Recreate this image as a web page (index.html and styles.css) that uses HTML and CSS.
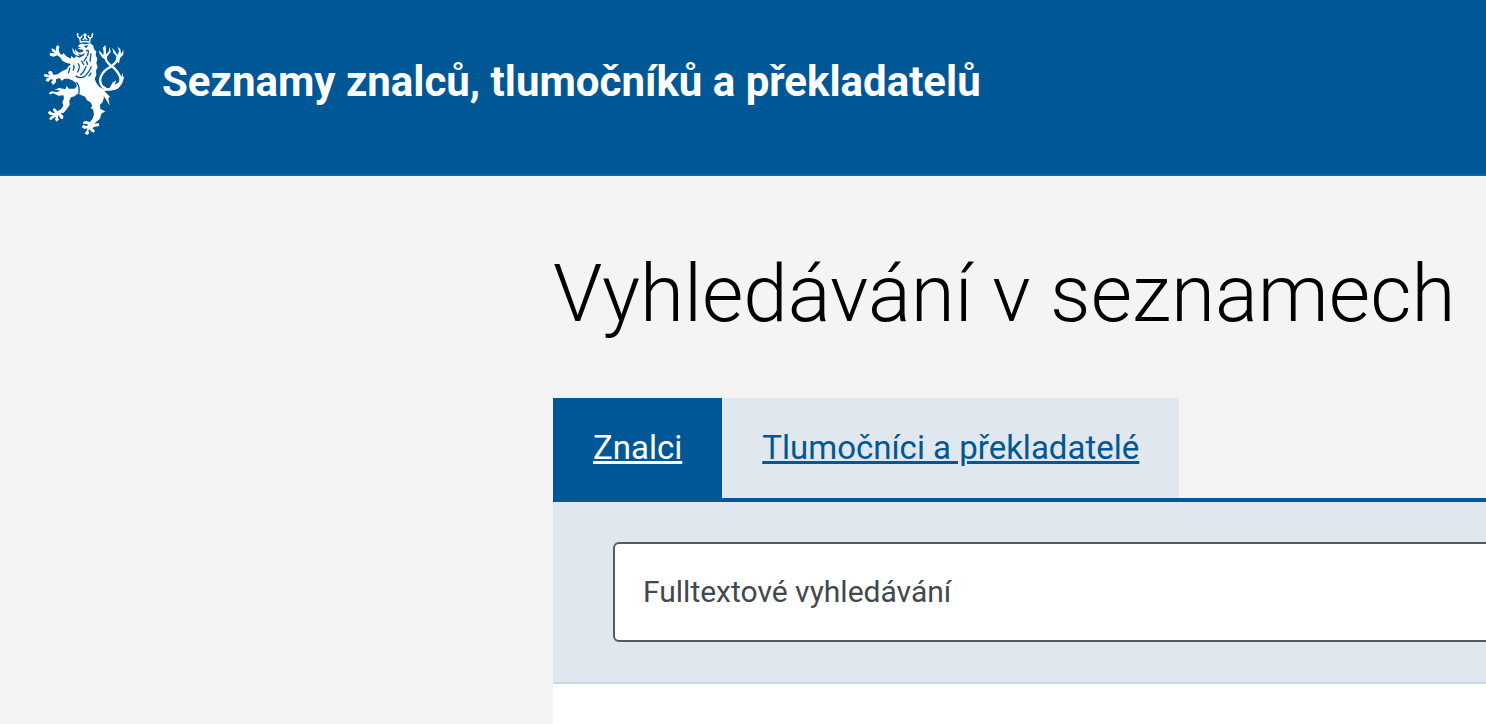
FILE: index.html
```html
<!DOCTYPE html>
<html lang="cs">
<head>
  <meta charset="UTF-8" />
  <meta name="viewport" content="width=device-width, initial-scale=1.0" />
  <title>Seznamy znalců, tlumočníků a překladatelů</title>
  <link rel="stylesheet" href="styles.css">
</head>
<body>
  <!-- Header -->
  <header class="header">
    <svg class="logo" viewBox="0 0 288 348" aria-hidden="true">
      <!-- Crown -->
      <path class="logo-crown" d="M131 49 Q147 44 163 49 M133 46 L131 36 Q124 34 125 25 M161 46 L163 36 Q170 34 169 25 M131 36 Q137 36 138 28 M163 36 Q157 36 156 28 M140 42 Q147 38 147 30 Q147 38 154 42" />
      <path d="M141 27 L147 21 L153 27 L147 34 Z M121 27 L124 20 L130 25 Z M165 25 L170 20 L173 27 Z" />
      <!-- Head, mane, body and right hind leg -->
      <path d="M125 61 L131 55 L139 53 L150 55 L163 52 L172 59 L174 69 L181 77 L179 87 L184 99 L181 111 L185 123 L180 134 L181 147 L176 158 L181 171 L190 183 L207 191 L199 195 L204 214 L200 228 L192 237 L193 249 L208 256 L196 263 L192 278 L181 287 L175 294 L188 291 L190 300 L177 302 L169 306 L177 314 L173 320 L164 315 L161 309 L157 314 L160 322 L153 327 L146 322 L153 313 L154 307 L145 309 L137 303 L142 297 L151 300 L157 297 L151 293 L142 294 L141 288 L150 285 L161 288 L169 280 L174 265 L171 250 L163 246 L169 240 L163 229 L153 223 L147 212 L135 207 L123 204 L116 211 L105 214 L100 224 L101 237 L91 251 L83 260 L74 262 L82 270 L81 279 L74 278 L67 267 L66 276 L69 281 L61 287 L57 280 L60 272 L51 277 L46 282 L39 279 L44 272 L52 268 L42 267 L35 260 L41 254 L49 260 L57 261 L51 253 L52 247 L58 248 L64 256 L75 250 L82 239 L79 229 L84 217 L82 208 L67 209 L56 203 L50 202 L45 205 L38 203 L45 196 L61 198 L73 196 L64 191 L54 191 L70 186 L88 190 L92 180 L98 188 L116 188 L123 180 L119 170 L109 163 L97 158 L85 158 L78 164 L70 156 L60 160 L60 169 L51 177 L45 168 L52 161 L44 160 L37 167 L29 165 L31 158 L41 153 L31 154 L23 150 L26 143 L35 146 L43 149 L36 141 L40 134 L47 136 L53 147 L65 145 L79 135 L93 129 L96 122 L105 114 L92 111 L79 104 L72 94 L64 88 L53 92 L42 89 L41 82 L49 81 L57 83 L48 75 L46 68 L53 68 L61 76 L59 66 L64 57 L71 62 L68 70 L71 82 L78 87 L82 81 L91 91 L104 98 L106 90 L114 97 L121 91 L130 95 L144 88 L148 81 L137 86 L124 84 L117 76 L119 68 L122 76 L130 80 L139 78 L143 72 L132 70 L124 66 L136 65 Z" />
      <path d="M110 65 Q107 80 120 88 L132 91 L125 84 L116 78 Z" />
      <!-- Mane strokes and cut-outs -->
      <g class="logo-cut">
        <path d="M150 76 Q158 69 157 79 L154 90 M165 82 L162 107 M153 92 L143 106 M151 105 L155 117 M136 104 L144 117 M126 112 Q135 123 124 139 M113 116 Q116 124 111 134 M151 121 Q145 137 133 148 M166 121 Q161 137 144 153 M102 125 L97 142 M119 149 Q131 160 146 151 M158 151 L166 140" />
        <path d="M145 61 L153 60 L149 65 M121 169 Q133 180 128 207" />
      </g>
      <!-- Double tail -->
      <g class="logo-line">
        <path d="M245 99 Q240 113 218 126 C197 138 184 163 199 181 C215 197 241 191 251 176 C261 158 249 141 235 127 Q211 111 208 94" />
        <path class="logo-thin" d="M191 187 Q210 201 230 180" />
      </g>
      <path d="M213 103 L199 95 L190 82 L190 73 L202 88 L203 76 L200 66 L208 57 L210 69 L210 85 L218 77 L221 63 L224 78 L213 92 Z M239 102 L241 91 L232 80 L229 65 L237 76 L245 87 L249 76 L245 62 L253 69 L255 84 L262 72 L262 86 L252 96 L249 112 Z" />
      <path d="M221 187 L229 170 L241 163 L236 176 L247 170 L254 155 L261 140 L260 154 L265 151 L259 171 L247 187 L234 193 Z M190 194 L202 192 L222 212 L217 217 L221 239 L207 215 Z" />
    </svg>
    <span class="site-name">Seznamy znalců, tlumočníků a překladatelů</span>
  </header>

  <!-- Main Content -->
  <main class="content">
    <h1>Vyhledávání v seznamech</h1>
    <nav class="tabs">
      <a class="tab active" href="#znalci">Znalci</a>
      <a class="tab" href="#tlumocnici">Tlumočníci a překladatelé</a>
    </nav>
    <form class="search">
      <input class="search-input" type="text" placeholder="Fulltextové vyhledávání" aria-label="Fulltextové vyhledávání">
    </form>
    <div class="results"></div>
  </main>
</body>
</html>
```

FILE: styles.css
```css
/* Global Reset & Base Styles */
* {
  margin: 0;
  padding: 0;
  box-sizing: border-box;
}
body {
  min-height: 100vh;
  display: flex;
  flex-direction: column;
  font-family: Roboto, "Liberation Sans", sans-serif;
  background: #f4f4f4;
  color: #000;
  overflow-x: hidden;
}
/* Header */
.header {
  display: flex;
  align-items: center;
  gap: 30px;
  padding: 26px 36px 32px;
  background: #005796;
  border-bottom: 2px solid #1464a5;
}
.logo {
  flex: none;
  width: 96px;
  height: 116px;
  fill: #fff;
}
.logo-cut {
  fill: none;
  stroke: #005796;
  stroke-width: 4;
}
.logo-line {
  fill: none;
  stroke: #fff;
  stroke-width: 7;
}
.logo-crown {
  fill: none;
  stroke: #fff;
  stroke-width: 4;
}
.logo-thin {
  stroke-width: 5;
}
.site-name {
  padding-bottom: 4px;
  color: #fff;
  font-size: 42px;
  font-weight: 700;
  line-height: 48px;
}
/* Main Content */
.content {
  flex: 1;
  display: flex;
  flex-direction: column;
  margin-left: 553px;
}
h1 {
  padding: 68px 0 54px;
  font-size: 80px;
  font-weight: 300;
  line-height: 100px;
  white-space: nowrap;
}
/* Tabs */
.tabs {
  display: flex;
  border-bottom: 4px solid #005796;
}
.tab {
  padding: 30px 40px;
  background: #e0e7ee;
  color: #005796;
  font-size: 33px;
  line-height: 40px;
  text-decoration-thickness: 3px;
}
.tab.active {
  background: #005796;
  color: #fff;
}
/* Search */
.search {
  padding: 40px 0 40px 60px;
  background: #e0e7ee;
  border-bottom: 2px solid #ccdae8;
}
.search-input {
  display: block;
  width: calc(100% + 60px);
  height: 100px;
  padding: 0 28px 2px;
  border: 2px solid #5a5a5a;
  border-radius: 6px;
  background: #fff;
  font-family: inherit;
  font-size: 30px;
}
.search-input::placeholder {
  color: #41484f;
  opacity: 1;
}
.results {
  flex: 1;
  background: #fff;
}
```
